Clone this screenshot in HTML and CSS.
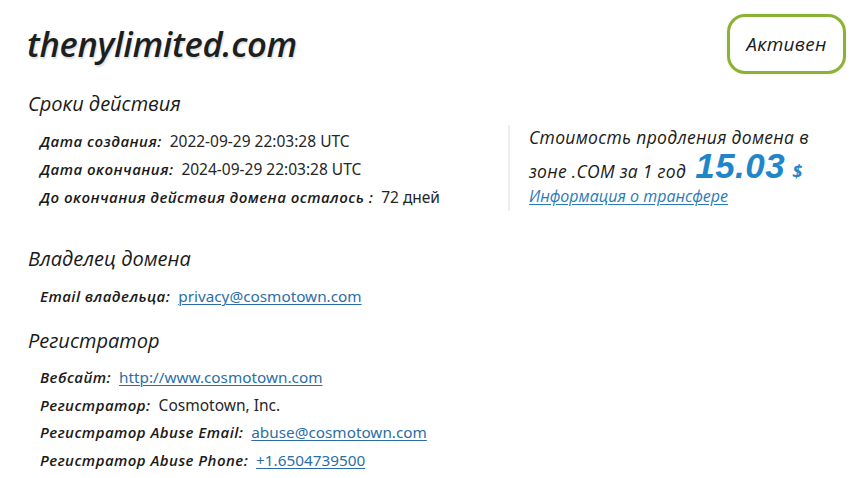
FILE: index.html
```html
<!DOCTYPE html>
<html lang="ru">
<head>
<meta charset="utf-8">
<title>thenylimited.com</title>
<link rel="stylesheet" href="styles.css">
</head>
<body>
<div class="page">
  <header class="header">
    <h1 class="domain">thenylimited.com</h1>
    <div class="status">Активен</div>
  </header>

  <section class="terms">
    <h2 class="section-title">Сроки действия</h2>
    <div class="terms-body">
      <div class="rows rows-terms">
        <div class="row"><span class="label">Дата создания:</span><span class="value">2022-09-29 22:03:28 UTC</span></div>
        <div class="row"><span class="label">Дата окончания:</span><span class="value">2024-09-29 22:03:28 UTC</span></div>
        <div class="row"><span class="label">До окончания действия домена осталось :</span><span class="value">72 дней</span></div>
      </div>
      <aside class="price">
        <div class="price-line">Стоимость продления домена в</div>
        <div class="price-line price-line-2">зоне .COM за 1 год <span class="amount">15.03</span><span class="currency">$</span></div>
        <a class="transfer" href="#">Информация о трансфере</a>
      </aside>
    </div>
  </section>

  <section class="owner">
    <h2 class="section-title">Владелец домена</h2>
    <div class="rows">
      <div class="row"><span class="label">Email владельца:</span><a class="value link" href="#">privacy@cosmotown.com</a></div>
    </div>
  </section>

  <section class="registrar">
    <h2 class="section-title">Регистратор</h2>
    <div class="rows rows-reg">
      <div class="row"><span class="label">Вебсайт:</span><a class="value link" href="#">http://www.cosmotown.com</a></div>
      <div class="row"><span class="label">Регистратор:</span><span class="value">Cosmotown, Inc.</span></div>
      <div class="row"><span class="label">Регистратор Abuse Email:</span><a class="value link" href="#">abuse@cosmotown.com</a></div>
      <div class="row"><span class="label">Регистратор Abuse Phone:</span><a class="value link" href="#">+1.6504739500</a></div>
    </div>
  </section>
</div>
</body>
</html>
```

FILE: styles.css
```css
* { box-sizing: border-box; }

html, body {
  margin: 0;
  padding: 0;
  background: #ffffff;
}

body {
  font-family: "Open Sans", "Noto Sans", sans-serif;
  color: #1b1b1b;
}

.page {
  padding: 14px 9px 0 27px;
}

.header {
  display: flex;
  justify-content: space-between;
  align-items: center;
  height: 60px;
}

.domain {
  margin: 0;
  font-size: 34.5px;
  line-height: 60px;
  font-style: italic;
  font-weight: 600;
  letter-spacing: -0.3px;
  color: #1d1f1f;
  text-shadow: 1px 2px 2px rgba(0, 0, 0, 0.14);
}

.status {
  width: 119px;
  height: 60px;
  border: 3px solid #8bb135;
  border-radius: 18px;
  display: flex;
  align-items: center;
  justify-content: center;
  font-style: italic;
  font-size: 19px;
  letter-spacing: 0.3px;
  color: #1a1a1a;
  box-shadow: 0 0 2px rgba(139, 177, 53, 0.25);
}

.section-title {
  margin: 0;
  font-size: 20px;
  line-height: 30px;
  font-weight: 400;
  font-style: italic;
  color: #1a1a1a;
  padding-left: 1px;
}

.terms { margin-top: 15px; }

.terms-body {
  display: flex;
  margin-top: 8px;
}

.rows {
  padding-left: 13px;
  margin-top: 8px;
}

.terms-body .rows { margin-top: 0; }

.rows-terms { width: 481px; flex: none; }

.row {
  height: 28px;
  line-height: 28px;
  display: flex;
  align-items: center;
  white-space: nowrap;
}

.rows-reg .row {
  height: 27.5px;
  line-height: 27.5px;
}

.label {
  font-style: italic;
  font-weight: 600;
  font-size: 15px;
  color: #1a1a1a;
  margin-right: 8px;
  letter-spacing: 0.45px;
}

.value {
  font-family: "Noto Sans", "Open Sans", sans-serif;
  font-size: 15.5px;
  color: #262626;
}

.link {
  font-size: 15.3px;
  color: #2b6ea6;
  text-decoration: underline;
  text-underline-offset: 2px;
  text-decoration-thickness: 1px;
}

.price {
  border-left: 2px solid #efefef;
  padding: 0 0 0 19px;
  margin-top: -2px;
  height: 86px;
}

.price-line {
  font-style: italic;
  font-size: 17.5px;
  letter-spacing: 0.3px;
  line-height: 24px;
  color: #1a1a1a;
  white-space: nowrap;
}

.price-line-2 {
  line-height: 30px;
  height: 30px;
  margin-top: 2px;
  display: flex;
  align-items: baseline;
}

.price-line-2 .amount { margin-left: 9px; }

.amount {
  font-family: "Liberation Sans", "Open Sans", sans-serif;
  font-size: 35px;
  font-weight: 700;
  font-style: italic;
  color: #1f87c9;
  line-height: 30px;
  letter-spacing: 0.5px;
}

.currency {
  font-size: 18px;
  font-weight: 700;
  font-style: italic;
  color: #1f87c9;
  margin-left: 7px;
}

.transfer {
  display: block;
  margin-top: 3px;
  font-style: italic;
  font-size: 16px;
  line-height: 24px;
  color: #2b7ab8;
  text-decoration: underline;
  text-underline-offset: 2px;
}

.owner { margin-top: 33px; }

.registrar { margin-top: 16px; }
```
